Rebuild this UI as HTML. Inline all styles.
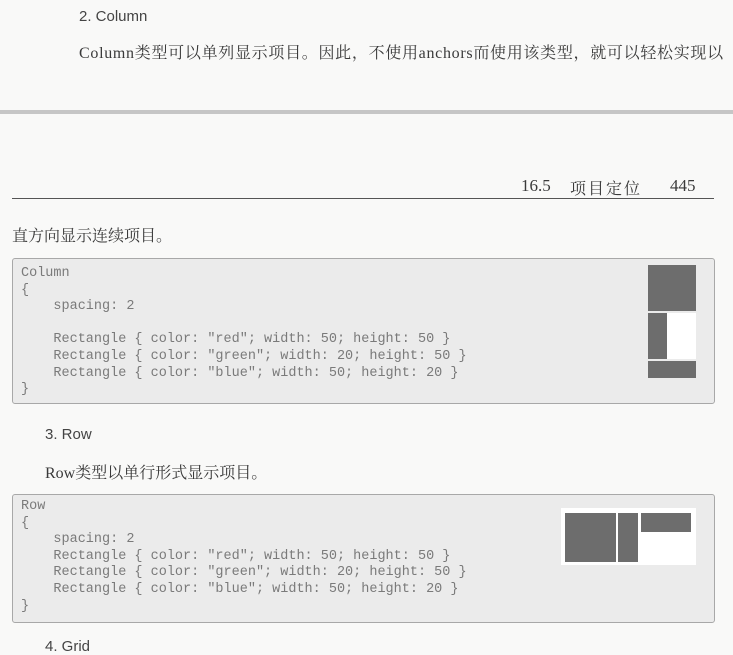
<!DOCTYPE html>
<html><head><meta charset="utf-8"><style>
html,body{margin:0;padding:0;}
body{width:733px;height:642px;overflow:hidden;position:relative;background:#f9f9f8;color:#333;}
.a{position:absolute;white-space:nowrap;}
.h{font-family:"Liberation Sans",sans-serif;font-size:15px;color:#444;}
.p{font-family:"Liberation Serif","Noto Serif CJK SC",serif;font-size:16px;color:#3a3a3a;}
.box{position:absolute;left:12px;width:701px;background:#ebebeb;border:1px solid #a8a8a8;border-radius:3px;}
.code{position:absolute;font-family:"Liberation Mono",monospace;font-size:13.5px;color:#7a7a7a;line-height:16.6px;white-space:pre;margin:0;}
.r{position:absolute;background:#6d6d6d;}
.w{position:absolute;background:#fff;}
</style></head><body>
<div class="a h" style="left:79px;top:8px;">2. Column</div>
<div class="a p" style="left:79px;top:40px;letter-spacing:0.7px;">Column类型可以单列显示项目。因此，不使用anchors而使用该类型，就可以轻松实现以</div>
<div class="a" style="left:0;top:110px;width:733px;height:4px;background:#c6c6c6;"></div>
<div class="a p" style="left:521px;top:176px;font-size:17px;">16.5</div>
<div class="a p" style="left:570px;top:176px;font-size:16px;letter-spacing:2px;">项目定位</div>
<div class="a p" style="left:670px;top:176px;font-size:17px;">445</div>
<div class="a" style="left:12px;top:198px;width:702px;height:1px;background:#555;"></div>
<div class="a p" style="left:12px;top:223px;">直方向显示连续项目。</div>

<div class="box" style="top:258px;height:144px;"></div>
<pre class="code" style="left:21px;top:266px;">Column
{
    spacing: 2

    Rectangle { color: "red"; width: 50; height: 50 }
    Rectangle { color: "green"; width: 20; height: 50 }
    Rectangle { color: "blue"; width: 50; height: 20 }
}</pre>
<div class="w" style="left:667px;top:313px;width:29px;height:46px;"></div>
<div class="r" style="left:648px;top:265px;width:48px;height:46px;"></div>
<div class="r" style="left:648px;top:313px;width:19px;height:46px;"></div>
<div class="r" style="left:648px;top:361px;width:48px;height:17px;"></div>

<div class="a h" style="left:45px;top:426px;">3. Row</div>
<div class="a p" style="left:45px;top:460px;">Row类型以单行形式显示项目。</div>

<div class="box" style="top:494px;height:127px;"></div>
<pre class="code" style="left:21px;top:499px;">Row
{
    spacing: 2
    Rectangle { color: "red"; width: 50; height: 50 }
    Rectangle { color: "green"; width: 20; height: 50 }
    Rectangle { color: "blue"; width: 50; height: 20 }
}</pre>
<div class="w" style="left:561px;top:508px;width:135px;height:57px;"></div>
<div class="r" style="left:565px;top:513px;width:51px;height:49px;"></div>
<div class="r" style="left:618px;top:513px;width:20px;height:49px;"></div>
<div class="r" style="left:641px;top:513px;width:50px;height:19px;"></div>

<div class="a h" style="left:45px;top:638px;">4. Grid</div>
</body></html>
